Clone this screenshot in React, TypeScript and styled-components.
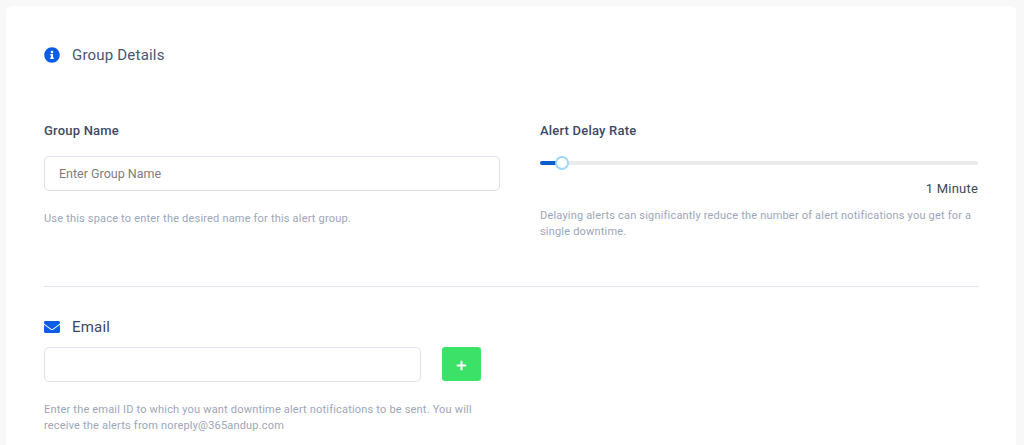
import React from "react";
import styled, { createGlobalStyle } from "styled-components";
import { FaEnvelope, FaInfoCircle, FaPlus } from "react-icons/fa";

const GlobalStyle = createGlobalStyle`
  html, body {
    margin: 0;
    height: 445px;
    overflow: hidden;
    background: #f8f8f8;
    font-family: Roboto, "Liberation Sans", sans-serif;
  }
`;

const Page = styled.div`
  padding: 6px 8px 0 6px;
`;

const Card = styled.div`
  background: #fff;
  border-radius: 6px 6px 0 0;
  padding: 38px 38px 0;
  height: 439px;
  box-sizing: border-box;
`;

const SectionTitle = styled.div<{ $color: string }>`
  display: flex;
  align-items: center;
  height: 22px;
  font-size: 15px;
  letter-spacing: 0.2px;
  color: ${(props) => props.$color};
`;

const IconSlot = styled.span`
  display: flex;
  width: 28px;
  color: #0b5ce6;
  font-size: 16px;
`;

const DetailsGrid = styled.div`
  display: grid;
  grid-template-columns: 456px 438px;
  column-gap: 40px;
  margin-top: 56px;
  height: 164px;
  border-bottom: 1px solid #e6e6ee;
`;

const Label = styled.div`
  font-size: 13px;
  font-weight: 500;
  line-height: 18px;
  letter-spacing: 0.2px;
  color: #3c4a66;
`;

const TextInput = styled.input<{ $width: number }>`
  display: block;
  box-sizing: border-box;
  width: ${(props) => props.$width}px;
  height: 35px;
  padding: 0 14px;
  border: 1px solid #e1e1ec;
  border-radius: 5px;
  background: #fff;
  outline: none;
  font-family: inherit;
  font-size: 12.5px;
  color: #3c4a66;

  &::placeholder {
    color: #7d7d7d;
    opacity: 1;
  }
`;

const GroupInputWrap = styled.div`
  margin-top: 16px;
`;

const Hint = styled.p<{ $top: number }>`
  margin: ${(props) => props.$top}px 0 0;
  font-size: 11px;
  line-height: 16px;
  letter-spacing: 0.19px;
  color: #9ca6b9;
`;

const Slider = styled.div`
  position: relative;
  height: 4px;
  margin-top: 21px;
  border-radius: 2px;
  background: #ebebeb;
`;

const SliderFill = styled.div`
  height: 100%;
  border-radius: 2px;
  background: #0b5ccf;
`;

const SliderThumb = styled.div`
  position: absolute;
  top: -5px;
  box-sizing: border-box;
  width: 14px;
  height: 14px;
  margin-left: -7px;
  border: 2px solid #9ed8fb;
  border-radius: 50%;
  background: #fff;
`;

const SliderValue = styled.div`
  margin-top: 15px;
  text-align: right;
  font-size: 13px;
  line-height: 18px;
  letter-spacing: 0.2px;
  color: #3f4656;
`;

const EmailSection = styled.div`
  margin-top: 29px;
`;

const EmailRow = styled.div`
  display: flex;
  gap: 21px;
  margin-top: 9px;
`;

const AddButton = styled.button`
  display: flex;
  align-items: center;
  justify-content: center;
  width: 39px;
  height: 34px;
  padding: 2px 0 0;
  border: none;
  border-radius: 3px;
  background: #3ce268;
  color: #fff;
  font-size: 11px;
`;

const EmailHint = styled(Hint)`
  width: 440px;
`;

const DELAY_PERCENT = 5;

export default function App() {
  return (
    <Page>
      <GlobalStyle />
      <Card>
        <SectionTitle $color="#4a5572">
          <IconSlot>
            <FaInfoCircle />
          </IconSlot>
          Group Details
        </SectionTitle>
        <DetailsGrid>
          <div>
            <Label>Group Name</Label>
            <GroupInputWrap>
              <TextInput $width={456} placeholder="Enter Group Name" />
            </GroupInputWrap>
            <Hint $top={20}>Use this space to enter the desired name for this alert group.</Hint>
          </div>
          <div>
            <Label>Alert Delay Rate</Label>
            <Slider>
              <SliderFill style={{ width: `${DELAY_PERCENT}%` }} />
              <SliderThumb style={{ left: `${DELAY_PERCENT}%` }} />
            </Slider>
            <SliderValue>1 Minute</SliderValue>
            <Hint $top={10}>
              Delaying alerts can significantly reduce the number of alert notifications you get for a single downtime.
            </Hint>
          </div>
        </DetailsGrid>
        <EmailSection>
          <SectionTitle $color="#3c4668">
            <IconSlot>
              <FaEnvelope />
            </IconSlot>
            Email
          </SectionTitle>
          <EmailRow>
            <TextInput $width={377} />
            <AddButton>
              <FaPlus />
            </AddButton>
          </EmailRow>
          <EmailHint $top={20}>
            Enter the email ID to which you want downtime alert notifications to be sent. You will receive the alerts
            from noreply@365andup.com
          </EmailHint>
        </EmailSection>
      </Card>
    </Page>
  );
}
